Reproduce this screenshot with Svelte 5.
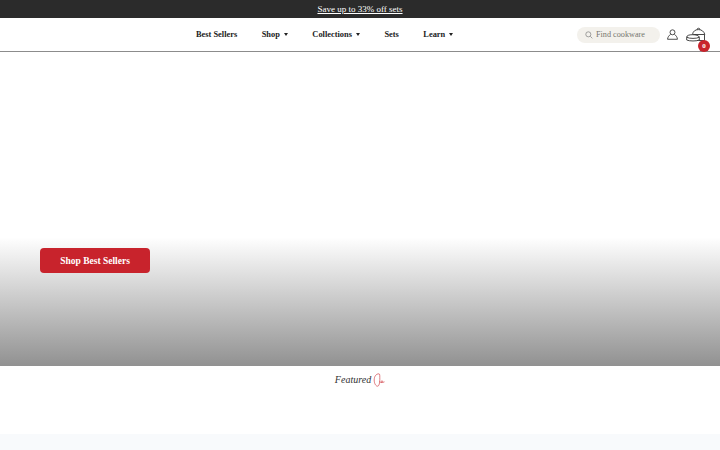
<script>
  const links = [
    { label: 'Best Sellers', caret: false },
    { label: 'Shop', caret: true },
    { label: 'Collections', caret: true },
    { label: 'Sets', caret: false },
    { label: 'Learn', caret: true }
  ];
</script>

<div class="page">
  <div class="promo"><a href="#sets">Save up to 33% off sets</a></div>

  <header class="header">
    <nav class="nav">
      {#each links as link}
        <a class="nav-link" href="#nav">
          {link.label}
          {#if link.caret}<span class="caret"></span>{/if}
        </a>
      {/each}
    </nav>

    <div class="tools">
      <div class="search">
        <svg viewBox="0 0 12 12" width="8" height="8" fill="none" stroke="#777" stroke-width="1">
          <circle cx="5" cy="5" r="3.800"/>
          <path d="M8 8l3 3"/>
        </svg>
        <span>Find cookware</span>
      </div>
      <svg class="user" viewBox="0 0 12 12" width="11" height="11" fill="none" stroke="#2b2b2b" stroke-width="0.9">
        <circle cx="6" cy="3.600" r="2.700"/>
        <path d="M3.900 5.900C2.200 7 .9 8.600.6 11.200h10.800C11.100 8.600 9.800 7 8.100 5.900"/>
      </svg>
      <div class="cart">
        <svg viewBox="0 0 20 15" width="20" height="15" fill="none" stroke="#333" stroke-width="0.9">
          <path d="M6.500 7.500C7 4 9.500 2.600 12.500 2.600C15.500 2.600 18 4.300 18.800 7.500Z"/>
          <path d="M11 2.600c0-1.800 3-1.800 3 0"/>
          <path d="M9 7.500v6M18.500 7.500v6H9"/>
          <path d="M.7 10.200C.7 8.500 3 7.700 6.500 7.700C10 7.700 13 8.500 13.300 10.200V13C11 14.300 3 14.300 .7 13Z" fill="#fff"/>
          <path d="M.7 10.200C3 11.800 11 11.800 13.300 10.200"/>
        </svg>
        <span class="count">0</span>
      </div>
    </div>
  </header>

  <section class="hero">
    <a class="cta" href="#best-sellers">Shop Best Sellers</a>
  </section>

  <section class="featured">
    <span class="featured-text">Featured</span>
    <svg viewBox="0 0 12 14" width="12" height="14" fill="none" stroke="#c9252e" stroke-width="0.6">
      <path d="M6 .8C3 .8 1.200 3.500 1.200 7C1.200 10.500 2.800 13.200 4.600 13.200C6 13.200 6.800 10 6.800 6.500C6.800 3.500 7 .8 6 .8Z"/>
      <path d="M6.600 8.500C7.500 9.800 9 9.800 9.500 8.800C10 7.800 8.800 7.300 8.300 8.300C7.900 9.300 9.500 10 11.500 8.800"/>
    </svg>
  </section>

  <div class="next"></div>
</div>

<style>
  :global(body) {
    background: #fff;
  }

  .page {
    width: 720px;
    height: 450px;
    overflow: hidden;
    font-family: "Liberation Serif", "DejaVu Serif", serif;
  }

  .promo {
    height: 18px;
    background: #2b2b2b;
    display: flex;
    align-items: center;
    justify-content: center;
  }

  .promo a {
    color: #fff;
    font-size: 9px;
    text-decoration: underline;
  }

  .header {
    height: 33px;
    border-bottom: 1px solid #8c8c8c;
    background: #fff;
    display: flex;
    align-items: center;
    padding-left: 196px;
  }

  .nav {
    display: flex;
    gap: 24.500px;
    padding-bottom: 1px;
  }

  .nav-link {
    display: flex;
    align-items: center;
    gap: 4px;
    color: #222;
    font-size: 8.400px;
    font-weight: 700;
    text-decoration: none;
  }

  .caret {
    width: 0;
    height: 0;
    border-left: 2.500px solid transparent;
    border-right: 2.500px solid transparent;
    border-top: 3.500px solid #222;
  }

  .tools {
    margin-left: auto;
    display: flex;
    align-items: center;
    padding-right: 14px;
  }

  .search {
    width: 83px;
    height: 16px;
    box-sizing: border-box;
    padding-left: 8px;
    background: #f3f1ec;
    border-radius: 8px;
    display: flex;
    align-items: center;
    gap: 3px;
    color: #77776f;
    font-size: 8.200px;
  }

  .user {
    margin-left: 7px;
  }

  .cart {
    position: relative;
    display: flex;
    margin-left: 8px;
  }

  .count {
    position: absolute;
    right: -4px;
    bottom: -10px;
    width: 12px;
    height: 12px;
    border-radius: 50%;
    background: #c8232c;
    color: #fff;
    font-size: 7px;
    font-weight: 700;
    display: flex;
    align-items: center;
    justify-content: center;
  }

  .hero {
    height: 314px;
    box-sizing: border-box;
    padding: 196px 0 0 40px;
    background: linear-gradient(#fff 0, #fff 59%, #919191 100%);
  }

  .cta {
    width: 110px;
    height: 25px;
    border-radius: 4px;
    background: #c8232c;
    color: #fff;
    font-size: 9.500px;
    font-weight: 700;
    text-decoration: none;
    display: flex;
    align-items: center;
    justify-content: center;
  }

  .featured {
    height: 68px;
    box-sizing: border-box;
    padding-top: 7px;
    display: flex;
    justify-content: center;
    align-items: flex-start;
    gap: 2px;
  }

  .featured-text {
    font-size: 10px;
    line-height: 14px;
    font-style: italic;
    color: #333;
  }

  .next {
    height: 16px;
    background: #f8fafc;
  }
</style>
